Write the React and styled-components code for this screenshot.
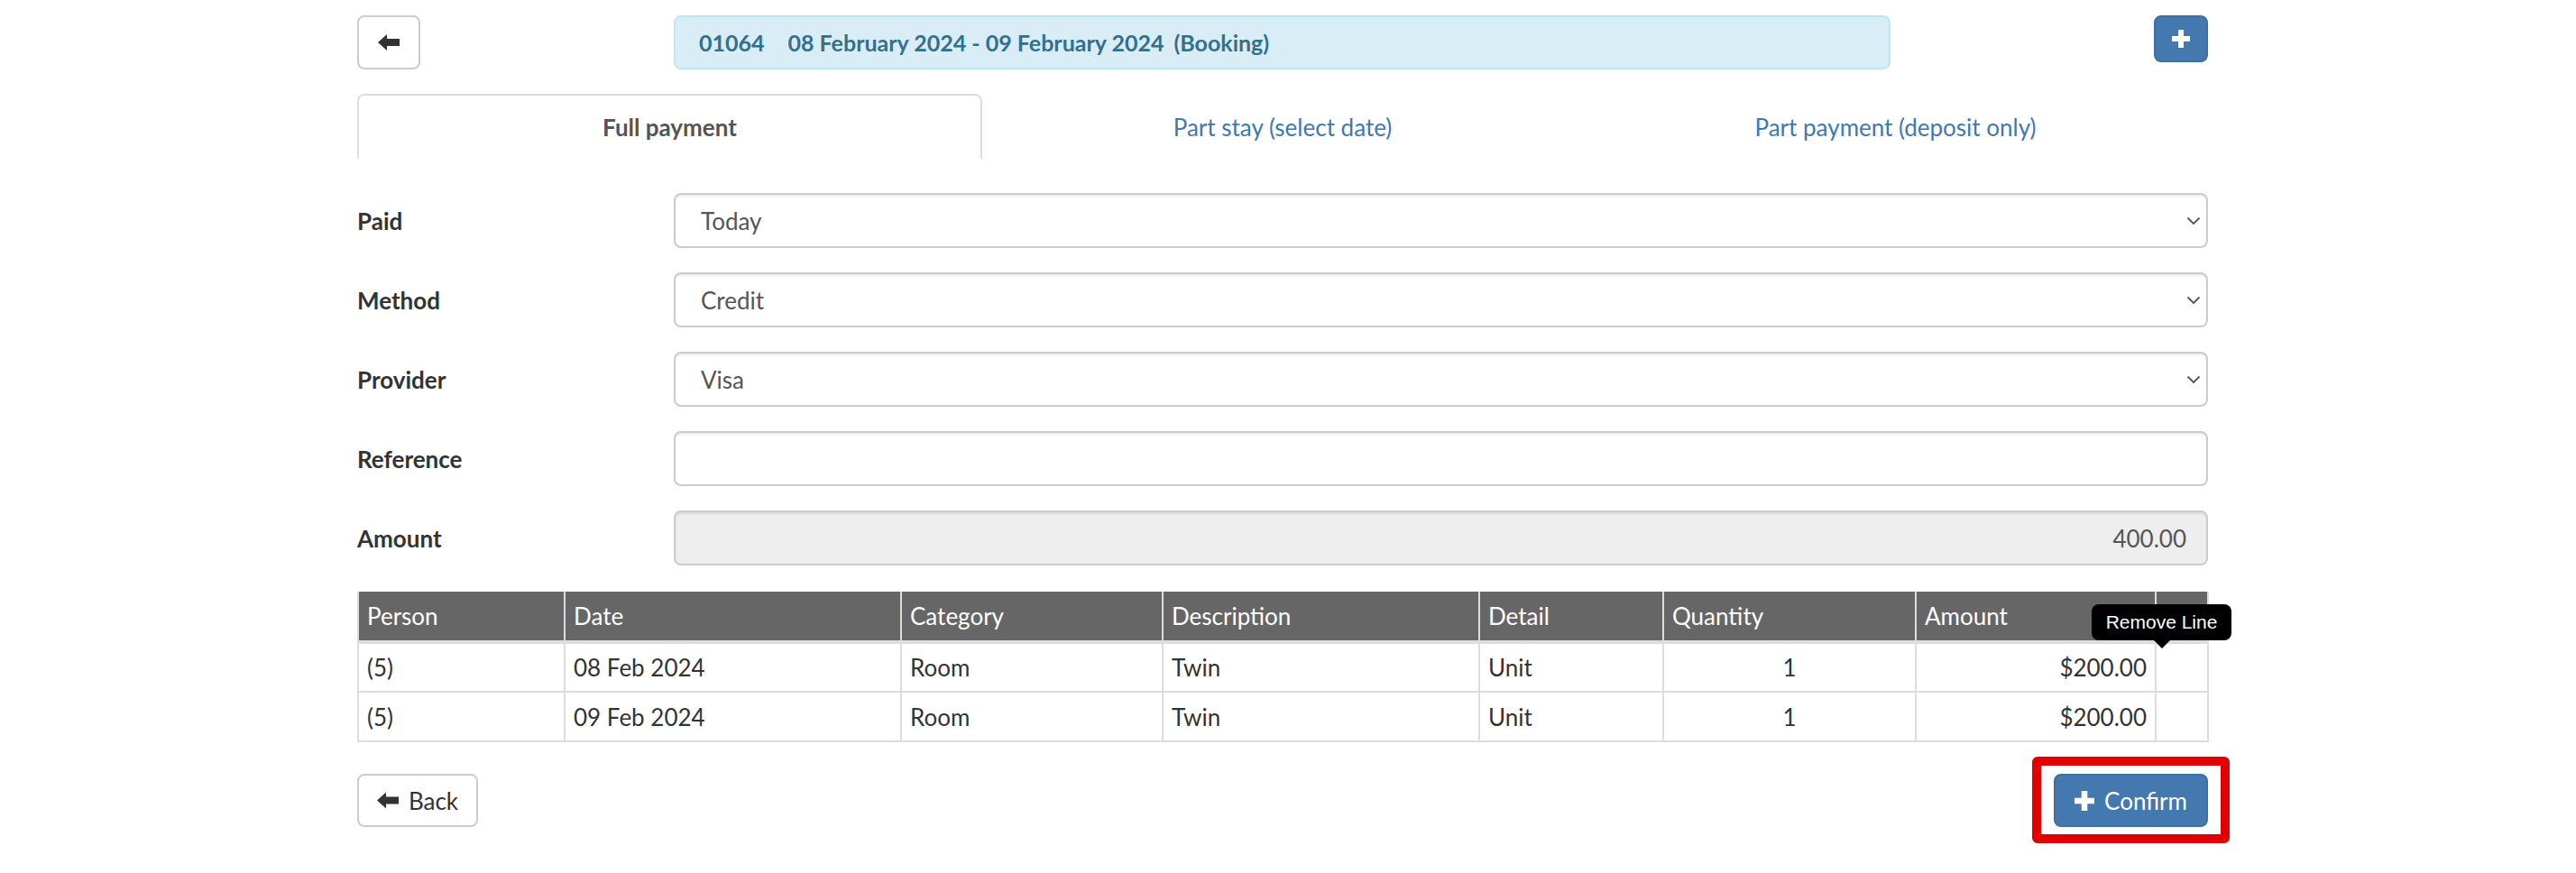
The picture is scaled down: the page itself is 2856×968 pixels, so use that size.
import React from "react";
import styled, { createGlobalStyle } from "styled-components";

const Global = createGlobalStyle`
  html, body { margin: 0; padding: 0; background: #fff; }
  body {
    font-family: Lato, "Liberation Sans", sans-serif;
    color: #333;
    font-size: 26px;
  }
  * { box-sizing: border-box; }
`;

const Page = styled.div`
  width: 2052px;
  min-height: 968px;
  margin-left: 396px;
  padding-top: 17px;
`;

const TopBar = styled.div`
  display: grid;
  grid-template-columns: 351px 1349px 1fr;
  align-items: start;
`;

const Btn = styled.button`
  display: inline-flex;
  align-items: center;
  justify-content: center;
  gap: 11px;
  width: ${(p) => p.$w}px;
  height: ${(p) => p.$h || 59}px;
  padding: 0;
  border: 2px solid ${(p) => (p.$primary ? "#3d6fa5" : "#ccc")};
  background: ${(p) => (p.$primary ? "#4479b0" : "#fff")};
  color: ${(p) => (p.$primary ? "#fff" : "#333")};
  border-radius: 8px;
  font-family: inherit;
  font-size: 26px;
  line-height: 1;
  justify-self: ${(p) => p.$align || "start"};
  cursor: pointer;
`;

const TitleBar = styled.div`
  height: 60px;
  display: flex;
  align-items: center;
  padding-left: 26px;
  background: #d9edf7;
  border: 2px solid #bce8f1;
  border-radius: 8px;
  color: #31708f;
  font-weight: 700;
  font-size: 25px;
  white-space: pre;
`;

const TitlePart = styled.span`
  margin-left: ${(p) => p.$gap || 0}px;
`;

const Tabs = styled.div`
  display: grid;
  grid-template-columns: 693px 666px 1fr;
  margin-top: 27px;
  border-bottom: 2px solid #ddd;
`;

const Tab = styled.div`
  height: 73px;
  margin-bottom: -2px;
  display: flex;
  align-items: center;
  justify-content: center;
  border: 2px solid ${(p) => (p.$active ? "#ddd" : "transparent")};
  border-bottom-color: ${(p) => (p.$active ? "#fff" : "transparent")};
  border-radius: 8px 8px 0 0;
  background: #fff;
  font-weight: ${(p) => (p.$active ? 700 : 400)};
  color: ${(p) => (p.$active ? "#555" : "#3f78b4")};
  font-size: 26px;
`;

const Form = styled.div`
  margin-top: 37px;
  display: grid;
  row-gap: 27px;
`;

const Field = styled.div`
  display: grid;
  grid-template-columns: 351px 1fr;
  align-items: center;
`;

const Label = styled.div`
  font-weight: 700;
  color: #333;
  font-size: 26px;
`;

const Control = styled.div`
  height: 61px;
  display: flex;
  align-items: center;
  justify-content: ${(p) => (p.$right ? "flex-end" : "space-between")};
  padding: ${(p) => (p.$right ? "0 22px 0 28px" : "0 6px 0 28px")};
  border: 2px solid #ccc;
  border-radius: 8px;
  background: ${(p) => (p.$disabled ? "#eee" : "#fff")};
  box-shadow: inset 0 2px 2px rgba(0, 0, 0, 0.075);
  color: #555;
  font-size: 26px;
`;

const TableWrap = styled.div`
  position: relative;
  margin-top: 29px;
`;

const Table = styled.table`
  width: 100%;
  border-collapse: collapse;
  table-layout: fixed;
  font-size: 26px;
`;

const Th = styled.th`
  height: 56px;
  padding: 0 9px;
  background: #666;
  color: #fff;
  font-weight: 400;
  text-align: left;
  border: 2px solid #ddd;
  border-top: none;
  border-bottom-width: 4px;
`;

const Td = styled.td`
  height: 55px;
  padding: 0 9px;
  border: 2px solid #ddd;
  color: #333;
  text-align: ${(p) => p.$align || "left"};
`;

const Tooltip = styled.div`
  position: absolute;
  left: 1923px;
  top: 14px;
  width: 155px;
  height: 40px;
  display: flex;
  align-items: center;
  justify-content: center;
  background: #000;
  color: #fff;
  border-radius: 8px;
  font-family: "Liberation Sans", Arial, sans-serif;
  font-size: 21px;
  &::after {
    content: "";
    position: absolute;
    left: 50%;
    bottom: -9px;
    margin-left: -9px;
    border-left: 9px solid transparent;
    border-right: 9px solid transparent;
    border-top: 9px solid #000;
  }
`;

const Footer = styled.div`
  margin-top: 35px;
  display: flex;
  justify-content: space-between;
  align-items: flex-start;
`;

const Highlight = styled.div`
  position: relative;
  display: flex;
`;

const RedBox = styled.div`
  position: absolute;
  top: -19px;
  bottom: -18px;
  left: -24px;
  right: -24px;
  border: 10px solid #e20000;
  border-radius: 6px;
  pointer-events: none;
`;

const ArrowLeft = ({ w = 24, h = 19 }) => (
  <svg width={w} height={h} viewBox="0 0 24 19">
    <path d="M0 9.5 L10 0.5 L10 5.5 L24 5.5 L24 13.5 L10 13.5 L10 18.5 Z" fill="#333" />
  </svg>
);

const Plus = ({ s = 20 }) => (
  <svg width={s} height={s} viewBox="0 0 20 20">
    <path d="M7 0h6v7h7v6h-7v7H7v-7H0V7h7z" fill="#fff" />
  </svg>
);

const Chevron = () => (
  <svg width="16" height="10" viewBox="0 0 16 10">
    <path d="M1.5 1.5l6.5 6.5 6.5-6.5" stroke="#555" strokeWidth="1.8" fill="none" />
  </svg>
);

const cols = [229, 373, 290, 351, 204, 280, 266, 58];
const heads = ["Person", "Date", "Category", "Description", "Detail", "Quantity", "Amount", ""];
const rows = [
  ["(5)", "08 Feb 2024", "Room", "Twin", "Unit", "1", "$200.00"],
  ["(5)", "09 Feb 2024", "Room", "Twin", "Unit", "1", "$200.00"],
];

const fields = [
  { label: "Paid", value: "Today", select: true },
  { label: "Method", value: "Credit", select: true },
  { label: "Provider", value: "Visa", select: true },
  { label: "Reference", value: "" },
  { label: "Amount", value: "400.00", disabled: true },
];

export default function App() {
  return (
    <>
      <Global />
      <Page>
        <TopBar>
          <Btn $w={70} $h={60}>
            <ArrowLeft w={24} h={20} />
          </Btn>
          <TitleBar>
            <TitlePart>01064</TitlePart>
            <TitlePart $gap={26}>08 February 2024 - 09 February 2024</TitlePart>
            <TitlePart $gap={11}>(Booking)</TitlePart>
          </TitleBar>
          <Btn $primary $w={60} $h={52} $align="end">
            <Plus s={20} />
          </Btn>
        </TopBar>

        <Tabs>
          <Tab $active>Full payment</Tab>
          <Tab>Part stay (select date)</Tab>
          <Tab>Part payment (deposit only)</Tab>
        </Tabs>

        <Form>
          {fields.map((f) => (
            <Field key={f.label}>
              <Label>{f.label}</Label>
              <Control $disabled={f.disabled} $right={f.disabled}>
                <span>{f.value}</span>
                {f.select && <Chevron />}
              </Control>
            </Field>
          ))}
        </Form>

        <TableWrap>
          <Table>
            <colgroup>
              {cols.map((w, i) => (
                <col key={i} style={{ width: w }} />
              ))}
            </colgroup>
            <thead>
              <tr>
                {heads.map((h, i) => (
                  <Th key={i}>{h}</Th>
                ))}
              </tr>
            </thead>
            <tbody>
              {rows.map((r, ri) => (
                <tr key={ri}>
                  {r.map((c, ci) => (
                    <Td key={ci} $align={ci === 5 ? "center" : ci === 6 ? "right" : "left"}>
                      {c}
                    </Td>
                  ))}
                  <Td />
                </tr>
              ))}
            </tbody>
          </Table>
          <Tooltip>Remove Line</Tooltip>
        </TableWrap>

        <Footer>
          <Btn $w={134}>
            <ArrowLeft />
            <span>Back</span>
          </Btn>
          <Highlight>
            <Btn $primary $w={171}>
              <Plus s={22} />
              <span>Confirm</span>
            </Btn>
            <RedBox />
          </Highlight>
        </Footer>
      </Page>
    </>
  );
}
